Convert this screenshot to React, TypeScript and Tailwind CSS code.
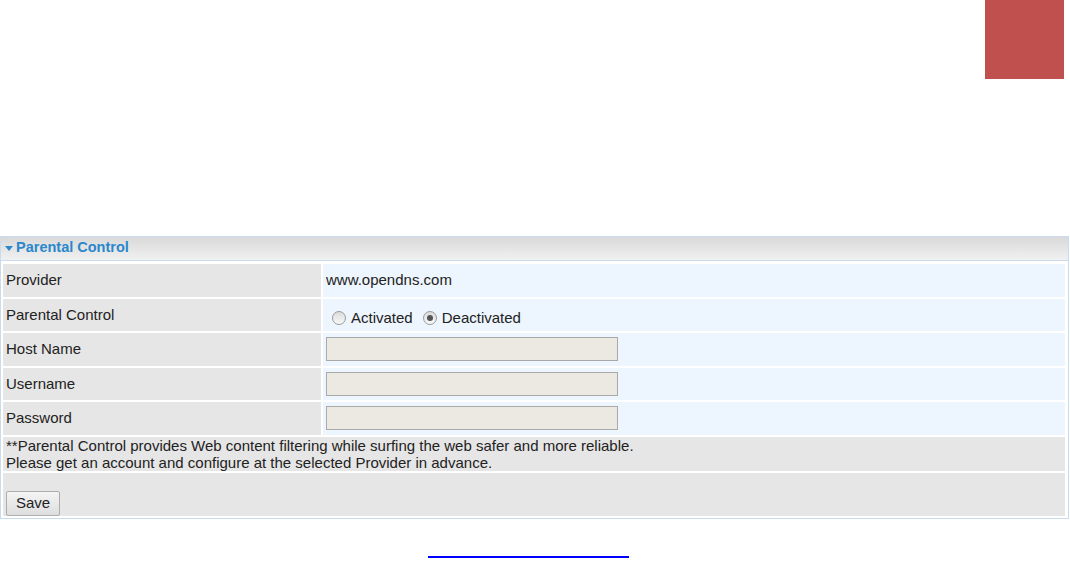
import React from 'react'

const rows = [
  { label: 'Provider', kind: 'text', value: 'www.opendns.com' },
  { label: 'Parental Control', kind: 'radio' },
  { label: 'Host Name', kind: 'input' },
  { label: 'Username', kind: 'input' },
  { label: 'Password', kind: 'input' },
]

function Radio({ checked }: { checked?: boolean }) {
  return (
    <span className="inline-flex h-[14px] w-[14px] items-center justify-center rounded-full border border-[#9a9a9a] bg-gradient-to-b from-[#dcdcdc] to-[#f8f8f8]">
      {checked && <span className="h-[6px] w-[6px] rounded-full bg-[#555]" />}
    </span>
  )
}

export default function App() {
  return (
    <div className="bg-white font-['Liberation_Sans',Arial,sans-serif] text-[15px] text-[#222] h-[561px] overflow-hidden">
      <div className="flex h-[236px] justify-end pr-[6px]">
        <div className="h-[79px] w-[79px] bg-[#c0504d]" />
      </div>

      <div className="mr-[1px] border border-[#c9dcef]">
        <div className="flex h-[24px] items-center gap-[3px] border-b border-[#c9dcef] bg-gradient-to-b from-[#d9d9d9] to-[#f1f1f1] pb-[2px] pl-[4px] text-[#2a87cc]">
          <svg width="8" height="5" viewBox="0 0 8 5" className="mt-[1px]">
            <path d="M0 0 H8 L4 5 Z" fill="#2a87cc" />
          </svg>
          <span className="text-[14.5px] font-bold leading-none">Parental Control</span>
        </div>

        <table className="border-separate border-spacing-[2px] pt-[1px]">
          <tbody>
            {rows.map((r) => (
              <tr key={r.label}>
                <td className="h-[32.5px] w-[318px] bg-[#e6e6e6] px-[3px] align-middle">{r.label}</td>
                <td className="w-[742px] bg-[#edf5fe] px-[3px] align-middle">
                  {r.kind === 'text' && r.value}
                  {r.kind === 'radio' && (
                    <div className="flex items-center pt-[6px] pl-[6px]">
                      <Radio />
                      <span className="ml-[5px]">Activated</span>
                      <span className="ml-[10px] flex items-center">
                        <Radio checked />
                      </span>
                      <span className="ml-[5px]">Deactivated</span>
                    </div>
                  )}
                  {r.kind === 'input' && (
                    <div className="h-[24px] w-[292px] border border-[#a9a9a9] bg-[#ebe9e2]" />
                  )}
                </td>
              </tr>
            ))}
            <tr>
              <td colSpan={2} className="h-[34px] bg-[#e6e6e6] px-[3px] leading-[17px]">
                **Parental Control provides Web content filtering while surfing the web safer and more reliable.
                <br />
                Please get an account and configure at the selected Provider in advance.
              </td>
            </tr>
            <tr>
              <td colSpan={2} className="h-[43px] bg-[#e6e6e6] px-[3px] pt-[18px] align-top">
                <button className="h-[25px] w-[54px] rounded-[2px] border border-[#adadad] bg-gradient-to-b from-[#f4f4f4] to-[#dedede] text-[15px] text-[#222]">
                  Save
                </button>
              </td>
            </tr>
          </tbody>
        </table>
      </div>

      <div className="ml-[428px] mt-[37px] h-[2px] w-[201px] bg-[#0000ff]" />
    </div>
  )
}
